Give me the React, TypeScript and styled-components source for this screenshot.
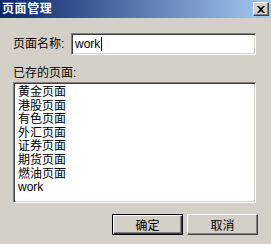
import styled, { createGlobalStyle } from "styled-components";

const pages = ["黄金页面", "港股页面", "有色页面", "外汇页面", "证券页面", "期货页面", "燃油页面", "work"];

const Global = createGlobalStyle`
  html, body {
    margin: 0;
    padding: 0;
    background: #d4d0c8;
  }
  body {
    font-family: "Liberation Sans", "Noto Sans CJK SC", sans-serif;
    font-size: 12px;
    color: #000;
  }
`;

export default function App() {
  return (
    <S.Window>
      <Global />
      <S.TitleBar>
        <S.Title>页面管理</S.Title>
        <S.CloseButton>
          <svg width="8" height="7" viewBox="0 0 8 7">
            <path d="M0 0h2l2 2 2-2h2L5 3.5 8 7H6L4 5 2 7H0l3-3.5z" fill="#000" />
          </svg>
        </S.CloseButton>
      </S.TitleBar>

      <S.Body>
        <S.NameRow>
          <S.Label>页面名称:</S.Label>
          <S.Field>
            work<S.Caret />
          </S.Field>
        </S.NameRow>

        <S.ListLabel>已存的页面:</S.ListLabel>
        <S.List>
          {pages.map((p) => (
            <S.Item key={p}>{p}</S.Item>
          ))}
        </S.List>

        <S.Buttons>
          <S.Button $default>确定</S.Button>
          <S.Button>取消</S.Button>
        </S.Buttons>
      </S.Body>
    </S.Window>
  );
}

const S = {
  Window: styled.div`
    width: 271px;
    height: 244px;
    background: #d4d0c8;
    overflow: hidden;
  `,

  TitleBar: styled.div`
    height: 18px;
    display: flex;
    align-items: center;
    justify-content: space-between;
    padding: 0 2px 0 2px;
    background: linear-gradient(to right, #0a246a, #a6caf0);
  `,

  Title: styled.span`
    color: #fff;
    font-weight: bold;
    font-size: 12px;
    letter-spacing: 0.6px;
    line-height: 18px;
  `,

  CloseButton: styled.div`
    width: 16px;
    height: 14px;
    box-sizing: border-box;
    display: flex;
    align-items: center;
    justify-content: center;
    background: #d4d0c8;
    border: 1px solid;
    border-color: #fff #404040 #404040 #fff;
    box-shadow: inset -1px -1px #808080;
    margin-right: 0;
  `,

  Body: styled.div`
    padding: 15px 15px 0 13px;
    display: flex;
    flex-direction: column;
  `,

  NameRow: styled.div`
    display: flex;
    align-items: center;
    height: 22px;
  `,

  Label: styled.span`
    width: 58px;
    line-height: 14px;
  `,

  Field: styled.div`
    flex: 1;
    height: 22px;
    box-sizing: border-box;
    background: #fff;
    border: 1px solid;
    border-color: #808080 #fff #fff #808080;
    box-shadow: inset 1px 1px #404040, inset -1px -1px #d4d0c8;
    display: flex;
    align-items: center;
    padding-left: 3px;
    line-height: 14px;
  `,

  Caret: styled.span`
    display: inline-block;
    width: 1px;
    height: 14px;
    background: #000;
    margin-left: 1px;
  `,

  ListLabel: styled.div`
    margin-top: 11px;
    line-height: 14px;
  `,

  List: styled.div`
    margin-top: 2px;
    height: 121px;
    box-sizing: border-box;
    background: #fff;
    border: 1px solid;
    border-color: #808080 #fff #fff #808080;
    box-shadow: inset 1px 1px #404040, inset -1px -1px #d4d0c8;
    padding: 3px 4px 0 4px;
  `,

  Item: styled.div`
    line-height: 13.6px;
    height: 13.6px;
  `,

  Buttons: styled.div`
    display: flex;
    justify-content: flex-end;
    gap: 4px;
    margin-top: 11px;
    margin-right: -2px;
  `,

  Button: styled.div<{ $default?: boolean }>`
    width: 71px;
    height: 21px;
    box-sizing: border-box;
    display: flex;
    align-items: center;
    justify-content: center;
    background: #d4d0c8;
    border: 1px solid;
    border-color: ${(p) => (p.$default ? "#000" : "#fff #404040 #404040 #fff")};
    box-shadow: ${(p) =>
      p.$default
        ? "inset 1px 1px #fff, inset -1px -1px #404040, inset -2px -2px #808080"
        : "inset -1px -1px #808080"};
    font-size: 12px;
  `,
};
